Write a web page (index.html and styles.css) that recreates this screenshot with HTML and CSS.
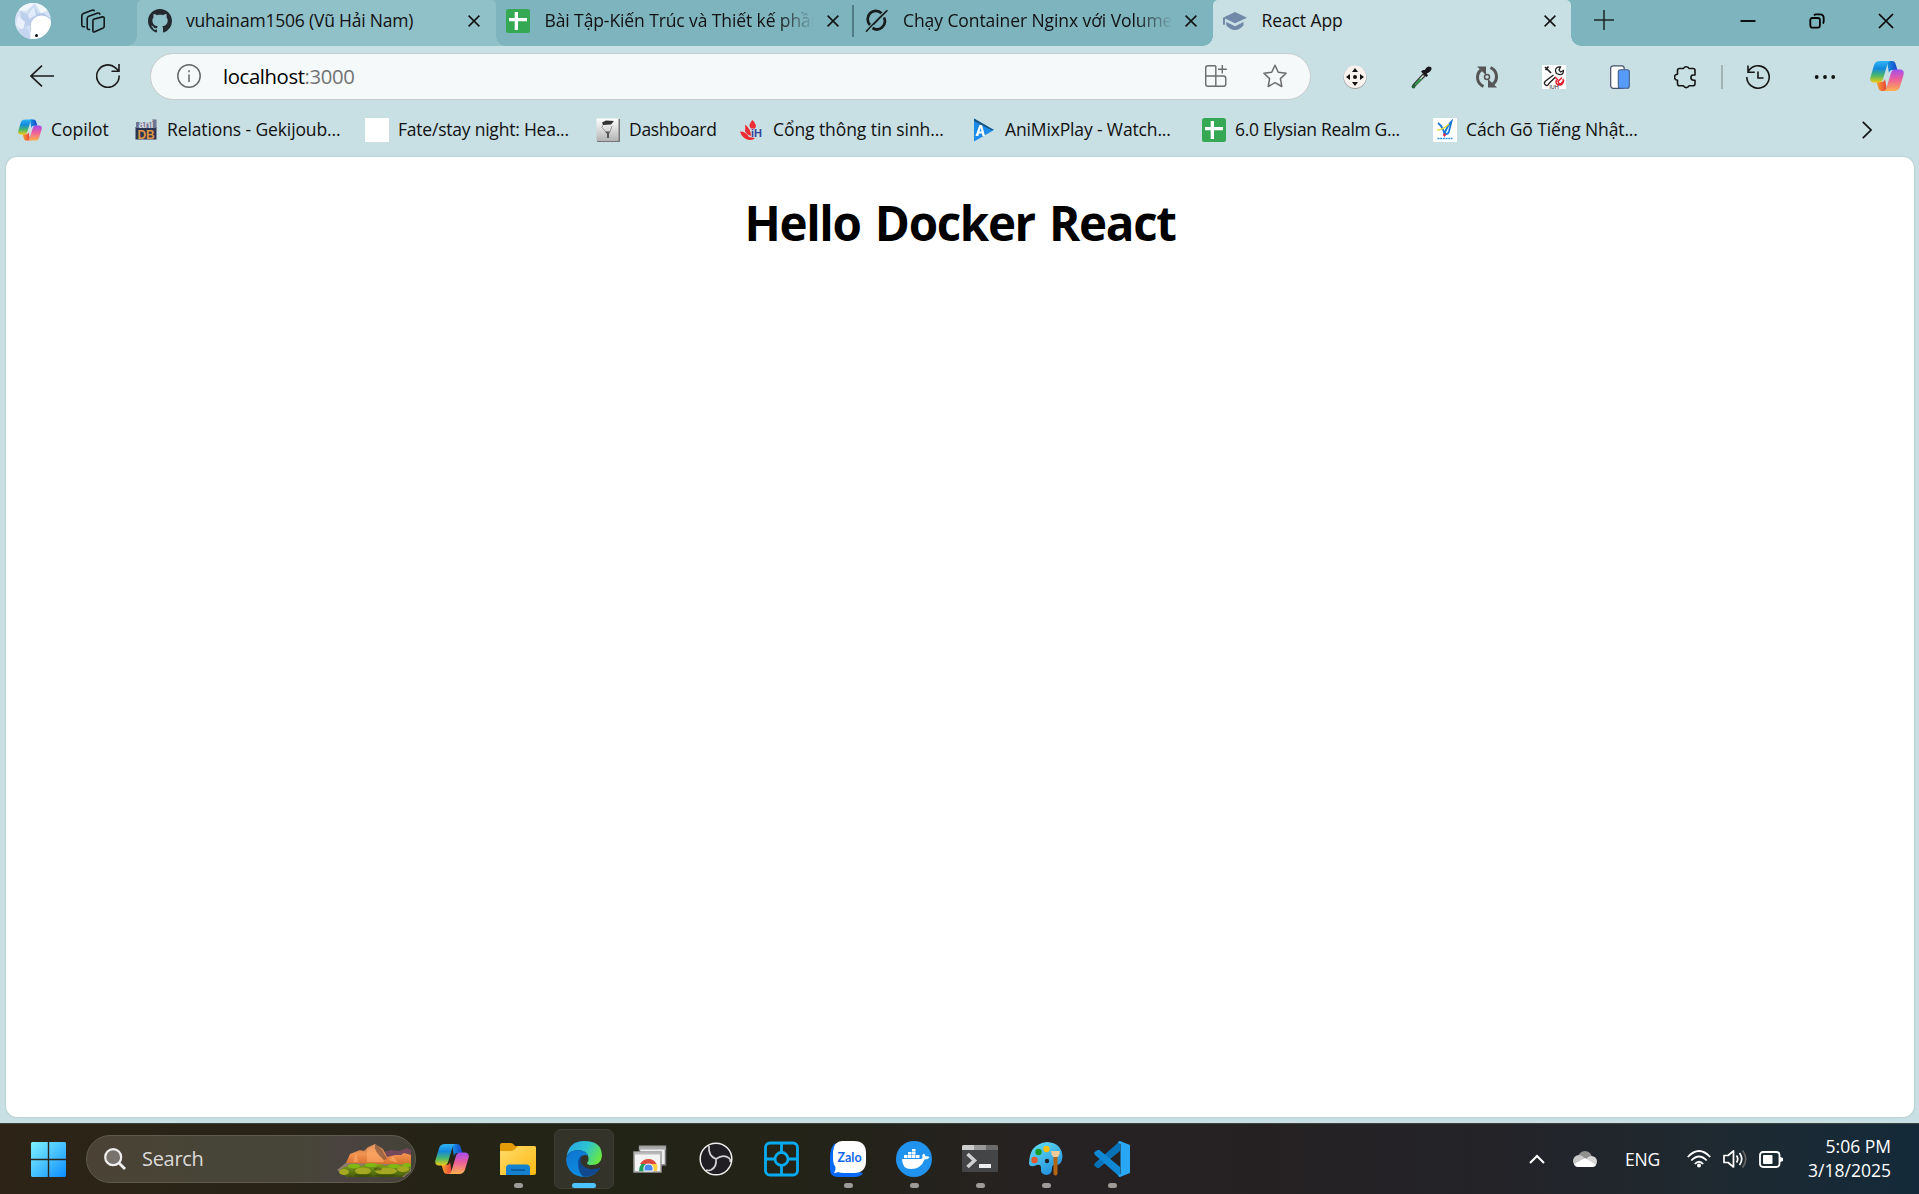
FILE: index.html
```html
<!DOCTYPE html>
<html lang="vi">
<head>
<meta charset="utf-8">
<title>React App</title>
<link rel="stylesheet" href="styles.css">
</head>
<body>
<svg class="defs" width="0" height="0" aria-hidden="true">
  <defs>
    <linearGradient id="cp-a" x1="0" y1="0" x2="0" y2="1"><stop offset="0" stop-color="#2fb4f5"/><stop offset=".35" stop-color="#1389dc"/><stop offset=".68" stop-color="#4cb868"/><stop offset="1" stop-color="#f2cb12"/></linearGradient>
    <linearGradient id="cp-b" x1="0" y1="0" x2="0" y2="1"><stop offset="0" stop-color="#a44df0"/><stop offset=".45" stop-color="#ec5e9c"/><stop offset="1" stop-color="#fdb04e"/></linearGradient>
    <linearGradient id="cp-c" x1="0" y1="0" x2="1" y2="0"><stop offset="0" stop-color="#1593e6"/><stop offset="1" stop-color="#1743c4"/></linearGradient>
    <linearGradient id="cp-d" x1="0" y1="0" x2="1" y2="0"><stop offset="0" stop-color="#f8a12e"/><stop offset="1" stop-color="#e8403c"/></linearGradient>
    <symbol id="copilot" viewBox="0 0 34 30">
      <path d="M17 0h5c2 0 3 1 3.600 3l1.900 6h-5c-2 0-3 1-3.600 3z" fill="url(#cp-c)"/>
      <path d="M17 30h-5c-2 0-3-1-3.600-3l-1.900-6h5c2 0 3-1 3.600-3z" fill="url(#cp-d)"/>
      <path d="M10 0h11c-2 0-3 1.500-3.600 3.500l-4.200 14c-.7 2.400-2 4-5 4H4c-3 0-4.500-2-3.500-5.500l3.600-12C5 1.200 7 0 10 0z" fill="url(#cp-a)"/>
      <path d="M24 30H13c2 0 3-1.500 3.600-3.500l4.200-14c.7-2.400 2-4 5-4H30c3 0 4.500 2 3.500 5.500l-3.600 12C29 28.800 27 30 24 30z" fill="url(#cp-b)"/>
    </symbol>
    <symbol id="sheet" viewBox="0 0 24 24"><rect width="24" height="24" rx="2.500" fill="#34a853"/><path d="M3 9h18v3.200H12V21H8.700V12.200H3zM8.700 3H12v7H8.700z" fill="#fff"/></symbol>
    <symbol id="x" viewBox="0 0 12 12"><path d="M.6.600l10.800 10.800M11.400.600L.6 11.400" stroke="#111" stroke-width="1.500"/></symbol>
  </defs>
</svg>

<header class="titlebar">
  <svg class="avatar" viewBox="0 0 36 36">
    <defs><clipPath id="av"><circle cx="18" cy="18" r="18"/></clipPath></defs>
    <g clip-path="url(#av)">
      <rect width="36" height="36" fill="#d6e3f5"/>
      <path d="M0 0h36v6L26 10 20 0l-9 8L3 7z" fill="#f1f8fb"/>
      <path d="M5 8l7 3 7-9 4 8 7 0 4 5-14 5-12 5z" fill="#bcd0ec"/>
      <path d="M13 11l6-8 2 9-7 4z" fill="#e1ebfa"/>
      <path d="M3 13l7 6-2 9-7-6z" fill="#eaf1fc"/><path d="M3 27l9-3 5 12H10z" fill="#c5d5f0"/>
      <ellipse cx="26.500" cy="23.500" rx="11.500" ry="11.500" fill="#fff" stroke="#a9bde0" stroke-width=".9"/>
      <path d="M15.500 36c-.5-5 0-8 2-10l14 10z" fill="#fff"/>
    </g>
    <circle cx="21.500" cy="32.500" r="1.500" fill="#111"/>
  </svg>
  <svg class="workspaces" viewBox="0 0 24 24" fill="none" stroke="#121819" stroke-width="1.600" stroke-linejoin="round" stroke-linecap="round"><path d="M12.500 10.200l9-2.300q1.700-.4 1.700 1.300v8q0 1.200-1 1.700l-8.500 3.900q-1.800.7-1.800-1.200v-9.400q0-1.600.6-2z"/><path d="M8.500 20.500q-2.300.3-2.300-1.800V9.500q0-1.700 1.600-2.300l9-3.100q1.700-.5 2 1"/><path d="M3.500 17.700q-2.700.3-2.700-2V6.800q0-1.700 1.600-2.400L11 1.300q1.800-.6 2.200.4"/></svg>

  <div class="tab hovered">
    <svg class="favicon" viewBox="0 0 16 16"><path fill="#24292f" d="M8 0C3.580 0 0 3.580 0 8c0 3.540 2.290 6.530 5.470 7.590.4.070.55-.17.55-.38 0-.19-.01-.82-.01-1.490-2.010.37-2.530-.49-2.690-.94-.09-.23-.48-.94-.82-1.130-.28-.15-.68-.52-.01-.53.63-.01 1.080.58 1.230.82.72 1.210 1.870.87 2.330.66.070-.52.28-.87.51-1.070-1.780-.2-3.640-.89-3.640-3.950 0-.87.31-1.590.82-2.150-.08-.2-.36-1.020.08-2.120 0 0 .67-.21 2.200.82.640-.18 1.320-.27 2-.27s1.360.09 2 .27c1.530-1.040 2.200-.82 2.200-.82.440 1.100.16 1.920.08 2.120.51.56.82 1.270.82 2.150 0 3.070-1.870 3.750-3.650 3.950.29.25.54.73.54 1.480 0 1.070-.01 1.930-.01 2.200 0 .21.15.46.55.38A8.010 8.010 0 0 0 16 8c0-4.420-3.580-8-8-8z"/></svg>
    <span class="tab-title t1">vuhainam1506 (Vũ Hải Nam)</span>
    <svg class="close"><use href="#x"/></svg>
  </div>
  <div class="tab divided">
    <svg class="favicon"><use href="#sheet"/></svg>
    <span class="tab-title fade t2">Bài Tập-Kiến Trúc và Thiết kế phần</span>
    <svg class="close"><use href="#x"/></svg>
  </div>
  <div class="tab">
    <svg class="favicon" viewBox="0 0 24 24" fill="none" stroke="#181c1d"><path d="M16.500 4.300A8 8.200 0 0 0 5 16" stroke-width="2.700"/><path d="M7.500 19A8 8.200 0 0 0 19 8.500" stroke-width="2.700"/><path d="M1 22.800Q9 13.500 22.500 1.200" stroke-width="1.500"/><path d="M8.500 15.500L21.500 2" stroke-width="1.300"/></svg>
    <span class="tab-title fade t3">Chạy Container Nginx với Volume</span>
    <svg class="close"><use href="#x"/></svg>
  </div>
  <div class="tab active">
    <svg class="favicon" viewBox="0 0 24 24" fill="#7189a8"><path d="M12 3L24 8.700 12 14.300 2 9.600V14.500Q2 16 1 16T0 14.500V8.700z"/><path d="M3.200 12.800L12 17l8.500-4.200v3.500Q17 21 12 21T3.200 16.300z"/><path d="M2 11.500l10 5 10-5" fill="none" stroke="#c8dfe3" stroke-width="1.300"/></svg>
    <span class="tab-title t4">React App</span>
    <svg class="close"><use href="#x"/></svg>
  </div>
  <svg class="newtab" viewBox="0 0 20 20"><path d="M10 0v20M0 10h20" stroke="#1a2426" stroke-width="1.500"/></svg>
  <div class="window-controls">
    <svg viewBox="0 0 16 16"><path d="M.5 8h15" stroke="#000" stroke-width="1.800"/></svg>
    <svg viewBox="0 0 16 16" fill="none" stroke="#000" stroke-width="1.800"><rect x="1.300" y="5" width="9.600" height="9.600" rx="2"/><path d="M5 2.300Q6 1.300 7 1.300h4Q14.700 1.300 14.700 5v3.500Q14.700 9.700 13.800 10.500"/></svg>
    <svg viewBox="0 0 16 16"><path d="M1 1l14 14M15 1L1 15" stroke="#000" stroke-width="1.700"/></svg>
  </div>
</header>

<nav class="toolbar">
  <svg class="back" viewBox="0 0 24 22" fill="none" stroke="#1b1b1b" stroke-width="1.600"><path d="M24 11H1M12 .6L1 11l11 10.400"/></svg>
  <svg class="reload" viewBox="0 0 24 24" fill="none" stroke="#1b1b1b" stroke-width="1.600"><path d="M23.100 11.500A11.200 11.200 0 1 1 19.500 3.900L23 7M23 0v7.200h-7.500"/></svg>
  <div class="address">
    <svg class="info" viewBox="0 0 24 24" fill="none" stroke="#666" stroke-width="1.500"><circle cx="12" cy="12" r="11.200"/><path d="M12 10.500v7.500M12 6.200v2"/></svg>
    <span class="url">localhost<span class="port">:3000</span></span>
    <svg class="apps" viewBox="0 0 22 22" fill="none" stroke="#6c6c6c" stroke-width="1.400"><path d="M10.800.700H3Q.7.700.7 3v16Q.7 21.300 3 21.300h15.500Q20.800 21.300 20.800 19v-5.500Q20.800 11 18.500 11H.7M10.800.700V21.300M17.300 0v8.600M13 4.300h8.800"/></svg>
    <svg class="star" viewBox="0 0 24 24" fill="none" stroke="#6c6c6c" stroke-width="1.500" stroke-linejoin="round"><path d="M12 1.200l3.300 7 7.800 1-5.700 5.400 1.400 7.900-6.800-3.800-6.800 3.800 1.400-7.900L.9 9.200l7.800-1z"/></svg>
  </div>
  <div class="extensions">
    <svg viewBox="0 0 24 24"><circle cx="12" cy="12.400" r="11.500" fill="#9c9c9c"/><circle cx="12" cy="11.800" r="11.200" fill="#f8f3ef"/><g fill="#111"><circle cx="12" cy="12" r="2"/><path d="M12 3l3 4H9zM12 21l3-4H9zM3 12l4-3v6zM21 12l-4-3v6z"/></g></svg>
    <svg viewBox="0 0 24 24"><path d="M4.500 19.500L14 9l2 2L6.500 20.500z" fill="#cfe8d6" stroke="#333" stroke-width="1.200"/><path d="M5.500 19l5-5h3l-6.500 6.500z" fill="#319447"/><path d="M12 6.500l5.500 5.500 1.500-1.500-1.300-2Q22 6.500 22.500 4T19.500 1.500Q17 2 15.800 5L14 5z" fill="#17171d"/><circle cx="4.500" cy="21.500" r="1.900" fill="#20663a"/></svg>
    <svg viewBox="0 0 24 24" fill="none" stroke="#555" stroke-width="3"><path d="M8.500 21.300A9.600 9.600 0 0 1 6 5M15.500 2.700A9.600 9.600 0 0 1 18 19"/><path d="M2 1.500h9V10zM22 22.500h-9V14z" fill="#555" stroke="none"/><circle cx="12" cy="12" r="2.500" stroke-width="1.500"/></svg>
    <svg viewBox="0 0 24 24"><rect width="24" height="24" fill="#fff"/><g fill="none" stroke="#222" stroke-width="1.300"><path d="M3 2l6 6M6.500 1.500L3.500 5" stroke-width="1.700"/><path d="M18.500 2q-5-.5-5 4l1 2.500 3 1q4 .5 4-4l-3 1.500-1.500-2z"/><path d="M11.500 10L3 16.500q-1.500 2 .5 3.500t3.500-1.500L13.500 12"/></g><path d="M13 12l3 3M20 12.500l-4 4 1 2 2 .5 3-4M14.500 15q-2 5 4 5 4-2 2.500-6" fill="none" stroke="#e0212c" stroke-width="1.500"/><text x="12" y="24" font-size="5.500" text-anchor="middle" fill="#222" font-family="Liberation Sans,sans-serif">IUH</text></svg>
    <svg viewBox="0 0 24 24"><rect x="2.700" y=".8" width="13.500" height="22.500" rx="2.500" fill="#fff" stroke="#455168" stroke-width="1.200"/><rect x="10.300" y="4.800" width="11" height="18.500" rx="2" fill="#579bfa" stroke="#455d86" stroke-width="1.100"/></svg>
    <svg viewBox="0 0 24 24" fill="none" stroke="#161616" stroke-width="1.600" stroke-linejoin="round"><path d="M5.500 3.500h4a3 3 0 0 1 5.500 0h4q2 0 2 2V10h-1.500a2.600 2.600 0 0 0 0 5.200H21v3.600q0 2-2 2h-4a3 3 0 0 1-5.500 0h-4q-2 0-2-2V15.300a3 3 0 0 1 0-6V5.500q0-2 2-2z"/></svg>
    <i class="rule"></i>
    <svg viewBox="0 0 24 24" fill="none" stroke="#161616" stroke-width="1.600"><path d="M.8 12a11.200 11.200 0 1 0 2.800-7.400L1.800 6.800M2 .5v6.800h6.800M12 6.500V13h5.500"/></svg>
    <svg viewBox="0 0 24 24" fill="#111"><circle cx="3.700" cy="12" r="1.900"/><circle cx="12" cy="12" r="1.900"/><circle cx="20.200" cy="12" r="1.900"/></svg>
  </div>
  <svg class="copilot-btn"><use href="#copilot"/></svg>
</nav>

<nav class="bookmarks">
  <a class="b1"><svg><use href="#copilot" y="1" height="22"/></svg><span>Copilot</span></a>
  <a class="b2"><svg viewBox="0 0 24 24"><rect x="1.500" y="9" width="21" height="12.500" fill="#2b3552"/><path d="M2 4h16V1.500h4.500V10H2z" fill="#6d7590"/><text x="12" y="9.500" font-size="10.500" font-weight="bold" text-anchor="middle" fill="#d7d9e2" font-family="Liberation Sans,sans-serif">ani</text><text x="12" y="20.500" font-size="12" font-weight="bold" text-anchor="middle" fill="#e09542" font-family="Liberation Sans,sans-serif">DB</text></svg><span>Relations - Gekijoub...</span></a>
  <a class="b3"><svg viewBox="0 0 24 24"><rect width="24" height="24" fill="#fff"/></svg><span>Fate/stay night: Hea...</span></a>
  <a class="b4"><svg viewBox="0 0 24 24"><defs><linearGradient id="gr" x2="0" y2="1"><stop stop-color="#fff"/><stop offset="1" stop-color="#b4b4b4"/></linearGradient></defs><path d="M2 1h22v23H1z" fill="#777"/><rect x=".5" y=".5" width="22" height="22.500" rx="1" fill="url(#gr)"/><path d="M6 4.500l4-2 8 .5-3 3.500-8 .5z" fill="#333"/><path d="M7 7l-1 2.500 4 4.500M16 8l-2 6" stroke="#999" fill="none"/><path d="M9 13.500h5l-1 2.500v4h-2v-4z" fill="#555"/></svg><span>Dashboard</span></a>
  <a class="b5"><svg viewBox="0 0 24 24"><path d="M12.500 2q5 5 2.500 8.500h-4Q7.500 7 12.500 2zM5 6.500q6 4.500 6 11.500-5-2-6-5 .5-3 0-6.500zM0 13.500q6 0 9 5.500l6 1q-1.500 2.500-6 2Q2 20.500 0 13.500z" fill="#ed2c33"/><text x="11" y="19" font-size="11" font-weight="bold" fill="#3a439b" font-family="Liberation Sans,sans-serif">iH</text></svg><span>Cổng thông tin sinh...</span></a>
  <a class="b6"><svg viewBox="0 0 24 24"><path d="M2 .5L22 12 2 23.500z" fill="#1c8bea"/><path d="M2 .5L22 12H19L2 3z" fill="#18567f"/><path d="M3.500 18L7.500 7h2.500l3 11h-2.500l-.6-2.500H7L6.300 18zM7.500 13.500h2L8.800 10z" fill="#fff"/></svg><span>AniMixPlay - Watch...</span></a>
  <a class="b7"><svg><use href="#sheet"/></svg><span>6.0 Elysian Realm G...</span></a>
  <a class="b8"><svg viewBox="0 0 24 24"><rect width="24" height="24" fill="#fff"/><path d="M5 5q5 4 6.500 11Q14 8 18.500 3.500q-1.500 6-2.500 10-1 3-4 2.500" fill="none" stroke="#1779d8" stroke-width="1.800"/><path d="M4 12q6 0 12-6" stroke="#e5da38" stroke-width="1.300" fill="none"/><circle cx="11.500" cy="17" r="1.400" fill="#e23"/><path d="M4.500 20.500h15" stroke="#2b97e6" stroke-width="1.300" stroke-dasharray="2 .7"/></svg><span>Cách Gõ Tiếng Nhật...</span></a>
  <svg class="more" viewBox="0 0 10 18"><path d="M.8.800L9 9 .8 17.200" fill="none" stroke="#111" stroke-width="1.700"/></svg>
</nav>

<main class="page"><h1>Hello Docker React</h1></main>

<footer class="taskbar">
  <svg class="start" viewBox="0 0 35 35"><defs><linearGradient id="win" x2="1" y2="1"><stop stop-color="#7df3ff"/><stop offset=".5" stop-color="#48c2ff"/><stop offset="1" stop-color="#0a8cff"/></linearGradient></defs><path d="M1 0H16.800V16.800H0V1zM18.200 0H34L35 1V16.800H18.200zM0 18.200H16.800V35H1L0 34zM18.200 18.200H35V34L34 35H18.200z" fill="url(#win)"/></svg>
  <div class="search">
    <svg class="lens" viewBox="0 0 22 22" fill="none" stroke="#eee"><circle cx="9.200" cy="9.200" r="8" stroke-width="2.200" fill="#77736c"/><path d="M15 15l6 6" stroke-width="2.800"/></svg>
    <span>Search</span>
    <svg class="scene" viewBox="0 0 76 36">
      <defs><linearGradient id="rock" x2="0" y2="1"><stop stop-color="#b87a50"/><stop offset=".5" stop-color="#f29350"/><stop offset="1" stop-color="#d8702f"/></linearGradient><linearGradient id="bush" x2="0" y2="1"><stop stop-color="#7fa51a"/><stop offset="1" stop-color="#465a0c"/></linearGradient></defs>
      <path d="M46 9l8-2 8 1 8-3 4 2v12H46z" fill="#73485b"/>
      <path d="M0 27l10-8h64v9l-7 6H10z" fill="#8f7969"/>
      <path d="M9 20l4-9 10-4 4 1 4-4 7-3 8 5 4 8 8-2h6l3-2 7 2v9H48z" fill="url(#rock)"/>
      <path d="M30 19V6l8-5 5 7 4 11zM16 19l3-10 2 10zM52 17l9 3-5-7z" fill="#ffab6a" opacity=".6"/>
      <path d="M38 1q-2 7 9 16l3-1-5-9z" fill="#7d5240" opacity=".7"/>
      <path d="M3 29q4-7 10-5 5-4 11-1 8-3 12 0 8-4 12 0 6-3 10 0 8-3 16-1l-1 6-8 6H10z" fill="url(#bush)"/>
      <g fill="#a5a91f"><ellipse cx="26" cy="28" rx="8" ry="3.500"/><ellipse cx="49" cy="28" rx="11" ry="3.500"/><ellipse cx="66" cy="26" rx="6" ry="3"/><ellipse cx="7" cy="29" rx="5" ry="3"/></g>
      <g fill="#80b914"><ellipse cx="17" cy="23" rx="6" ry="2.300"/><ellipse cx="34" cy="22" rx="6" ry="2"/><ellipse cx="57" cy="23" rx="6" ry="2"/><ellipse cx="70" cy="22" rx="4" ry="2"/></g>
      <g fill="#303f0c" opacity=".5"><ellipse cx="26" cy="32.500" rx="9" ry="1.500"/><ellipse cx="49" cy="32.500" rx="11" ry="1.500"/><ellipse cx="41" cy="26" rx="4" ry="1.500"/></g>
    </svg>
  </div>
  <div class="apps-row">
    <span class="app"><svg viewBox="0 0 36 36"><use href="#copilot" x="1" y="3" width="34" height="30"/></svg></span>
    <span class="app open"><svg viewBox="0 0 36 36"><defs><linearGradient id="fo" x2="1" y2="1"><stop stop-color="#ffdc6c"/><stop offset="1" stop-color="#fdb912"/></linearGradient></defs><path d="M0 4q0-2 2-2h9q2 0 4 3h19q2 0 2 2v10H0z" fill="#e39b08"/><path d="M0 10h12q2 0 4-3l2-2h16q2 0 2 2v25q0 2-2 2H0z" fill="url(#fo)"/><path d="M6 34v-7q0-3.500 3.500-3.500h17Q30 23.500 30 27v7z" fill="#1381cf"/><path d="M11 29h14" stroke="#0b4d8e" stroke-width="1.300"/></svg></span>
    <span class="app open current"><svg viewBox="0 0 36 36"><defs><linearGradient id="e1" x1="0" y1=".2" x2="1" y2=".6"><stop stop-color="#2aa5e4"/><stop offset=".5" stop-color="#2bc3d2"/><stop offset="1" stop-color="#6ae93e"/></linearGradient><linearGradient id="e2" x2=".5" y2="1"><stop stop-color="#0e74cf"/><stop offset="1" stop-color="#0d8ee2"/></linearGradient></defs><path d="M.5 15Q3.500 0 18 0 36 0 36 15q-1 9-10 9-5 0-5-2 2-2 1.500-5Q22 10 13 9 4 9 .5 15z" fill="url(#e1)"/><path d="M0 19Q1 9 12 9q8 0 10.500 6-7-3-8.500 4-1 9 8 12 6 1 11-3-5 8-15 8Q2 35 0 19z" fill="url(#e2)"/><path d="M12 21q1-6 5-7-4 4-1.500 9 5 6 12 5 4-.5 6-1 1 0-.5 2-6 7-15 7-6-3-6-15z" fill="#11498f"/></svg></span>
    <span class="app"><svg viewBox="0 0 36 36"><rect x="7.500" y="5" width="26" height="19" fill="#eee" stroke="#777" stroke-width="1.500"/><path d="M7 7h27" stroke="#aaa" stroke-width="3"/><rect x="2" y="11" width="27" height="20" fill="#f3f3f3" stroke="#999" stroke-width="1.500"/><path d="M2.500 12.500h26" stroke="#bbb" stroke-width="2"/><path d="M7 30a9.500 11 0 0 1 9-11v11z" fill="#17a160"/><path d="M8 23q3-5 8.500-5t8 5z" fill="#dc4a3d"/><path d="M16 23h9q1 3 0 7h-9z" fill="#ffce44"/><path d="M12 30q-1-7 4.500-7t4.500 7z" fill="#4a87ee" stroke="#fff"/></svg></span>
    <span class="app"><svg viewBox="0 0 36 36"><circle cx="18" cy="18" r="15.800" fill="#201e22" stroke="#eee" stroke-width="1.500"/><g fill="none" stroke="#d2d2d4" stroke-width="1.700"><path d="M18 18q-8-3-7-13M18 18q7-5 13-1 2 2 1 4M18 18q1 8-5 11-3 1-5 0"/></g></svg></span>
    <span class="app"><svg viewBox="0 0 36 36" fill="none" stroke="#08abf0" stroke-width="2.800"><rect x="1.500" y="2" width="32" height="32" rx="4.500"/><circle cx="17.500" cy="18" r="6.500"/><path d="M17.500 2v9.500M17.500 24.500v9.500M1.500 18h9.500M24 18h9.500"/></svg></span>
    <span class="app open"><svg viewBox="0 0 36 36"><path d="M5 2Q0 7 0 16v12q0 8 8 8h16q7 0 9-4L12 27z" fill="#0869f9"/><path d="M12 0h12q12 0 12 12v8q0 12-12 12H14q-4 0-6-1-2 1-4 1 2-3 1.500-6Q3 23 3 17v-6Q4 0 12 0z" fill="#fff"/><text x="19.500" y="20.800" text-anchor="middle" font-family="Lato,sans-serif" font-size="12.500" font-weight="bold" fill="#1268ef">Zalo</text></svg></span>
    <span class="app open"><svg viewBox="0 0 36 36"><circle cx="18" cy="18" r="18" fill="#2093ef"/><path d="M6 18h19q2-.5 1.500-2-1-2 1-3.500 2 1 2 3 2-.5 4 .5-1 2.500-5 2.500Q25 28 15 28 6 28 6 18z" fill="#fff"/><path d="M8 14h3.500v3H8zM12 14h3.500v3H12zM16 14h3.500v3H16zM20 14h3.500v3H20zM12 11h3.500v2.500H12zM16 11h3.500v2.500H16zM16 8h3.500v2.500H16z" fill="#fff"/></svg></span>
    <span class="app open"><svg viewBox="0 0 36 36"><rect y="4" width="36" height="27" rx="1.500" fill="#444547"/><path d="M0 9V5.500Q0 4 1.500 4H12v5z" fill="#ccc"/><path d="M12 4h12v5H12z" fill="#999"/><path d="M24 4h10.500Q36 4 36 5.500V9H24z" fill="#6b6b6b"/><path d="M5.500 13l7 6.500-7 6.500" fill="none" stroke="#d0d0d0" stroke-width="3.500"/><path d="M17 23h12v4H17z" fill="#eee"/></svg></span>
    <span class="app open"><svg viewBox="0 0 36 36"><defs><linearGradient id="pa" x2=".6" y2="1"><stop stop-color="#69e4f5"/><stop offset="1" stop-color="#2392de"/></linearGradient></defs><path d="M19 1q15 1 15.500 15-1 8-6 8-4-1-4.500 3 0 6-5 7-7 0-6-7 0-4-4-3-7 3-8-1Q1 3 19 1z" fill="url(#pa)"/><circle cx="19" cy="20" r="2.200" fill="#242226"/><circle cx="6.500" cy="19" r="3.200" fill="#e5552a"/><circle cx="10.500" cy="11" r="3.200" fill="#1b9a28"/><circle cx="18.500" cy="8" r="3.200" fill="#fdbd11"/><path d="M25.500 16h4v17q-2 3-4 0z" fill="#b46513"/><path d="M23 10h9q0 4-2.500 6h-4Q23 14 23 10z" fill="#f0ca98"/></svg></span>
    <span class="app open"><svg viewBox="0 0 36 36"><path d="M26 0v10L5 27H3l-3-3 1-2z" fill="#0872b8"/><path d="M1 14L0 11.500 3.500 9h2L26 26v10z" fill="#1188d6"/><path d="M26 0l10 4v28l-10 4q-2 0-2-2l2.500-1V3L24 2q0-2 2-2z" fill="#2aa7f4"/></svg></span>
  </div>
  <div class="tray">
    <svg class="chev" viewBox="0 0 16 10"><path d="M1 9l7-7 7 7" fill="none" stroke="#fff" stroke-width="2"/></svg>
    <svg class="cloud" viewBox="0 0 24 16"><circle cx="12" cy="7" r="7" fill="#8f8f8f"/><circle cx="6" cy="10" r="6" fill="#c8c8c8"/><circle cx="18.500" cy="10.500" r="5.500" fill="#d8d8d8"/><path d="M1 13l11-6 11 7q-1 2-4 2H5q-3 0-4-3z" fill="#fff"/></svg>
    <span class="lang">ENG</span>
    <svg class="wifi" viewBox="0 0 24 18" fill="none" stroke="#fff" stroke-width="1.800"><path d="M.8 7q11.200-12 22.400 0M4.300 10.500q7.700-8 15.400 0M7.800 14q4.200-4.500 8.400 0"/><circle cx="12" cy="15.500" r="2" fill="#fff" stroke="none"/></svg>
    <svg class="vol" viewBox="0 0 24 20" fill="none" stroke="#fff" stroke-width="1.700"><path d="M1 6.500h4L10.500 2v16L5 13.500H1z" stroke-linejoin="round"/><path d="M13.500 6.500q2.500 3.500 0 7M16.500 4q4.500 6 0 12"/><path d="M19.500 1.500q6.500 8.500 0 17" stroke="#666"/></svg>
    <svg class="bat" viewBox="0 0 24 17"><rect x="1" y="1" width="19.500" height="15" rx="3" fill="none" stroke="#fff" stroke-width="1.800"/><rect x="4" y="4" width="9.500" height="9" rx="1" fill="#fff"/><path d="M21 6l3 1v3l-3 1z" fill="#fff"/></svg>
    <div class="clock"><span class="time">5:06 PM</span><span class="date">3/18/2025</span></div>
  </div>
</footer>
</body>
</html>
```
FILE: styles.css
```css
* { box-sizing: border-box; }
body {
  margin: 0;
  height: 1194px;
  display: flex;
  flex-direction: column;
  overflow: hidden;
  background: #c8dfe3;
  color: #111;
  font-family: "Open Sans", "Noto Sans", sans-serif;
  font-size: 17.500px;
}
svg { display: block; flex: none; }
svg.defs { position: absolute; }
span { white-space: nowrap; }

/* Tab strip */
.titlebar { height: 46px; flex: none; display: flex; align-items: center; background: #7eb4be; padding-bottom: 4px; }
.avatar { width: 36px; height: 36px; margin-left: 15px; }
.workspaces { width: 24px; height: 24px; margin: 0 32px 0 30px; }
.tab { position: relative; width: 358.500px; height: 46px; margin-bottom: -4px; padding: 0 0 4px 10.500px; display: flex; align-items: center; flex: none; border-radius: 5px 5px 0 0; }
.favicon { width: 24px; height: 24px; margin-right: 14.500px; }
.tab-title { width: 268px; overflow: hidden; line-height: 28px; padding-bottom: 2px; }
.t1 { letter-spacing: -0.200px; }
.t2 { letter-spacing: -0.100px; }
.t3 { letter-spacing: -0.080px; }
.t4 { letter-spacing: -0.100px; }
.fade { -webkit-mask-image: linear-gradient(90deg, #000 232px, transparent 270px); mask-image: linear-gradient(90deg, #000 232px, transparent 270px); }
.close { width: 12px; height: 12px; margin-left: 14px; }
.hovered { --c: #90c0c8; background: var(--c); }
.active { --c: #c8dfe3; background: var(--c); }
.hovered::before, .hovered::after, .active::before, .active::after {
  content: ""; position: absolute; bottom: 0; width: 10px; height: 10px;
}
.hovered::before, .active::before { right: 100%; background: radial-gradient(circle at 0 0, transparent 9.500px, var(--c) 10px); }
.hovered::after, .active::after { left: 100%; background: radial-gradient(circle at 100% 0, transparent 9.500px, var(--c) 10px); }
.divided { border-right: 2px solid transparent; border-image: linear-gradient(transparent 6px, #507d85 6px, #507d85 36px, transparent 36px) 1; }
.newtab { width: 20px; height: 20px; margin-left: 23px; margin-top: -2px; }
.window-controls { display: flex; gap: 53px; margin: 0 25.500px 0 auto; }
.window-controls svg { width: 16px; height: 16px; }

/* Toolbar */
.toolbar { height: 60px; flex: none; display: flex; align-items: center; }
.back { width: 24px; height: 22px; margin: 0 42px 0 30px; }
.reload { width: 24px; height: 24px; margin-right: 30px; }
.address { width: 1161px; height: 47px; border: 1px solid #c6cccd; border-radius: 24px; background: #f5f9fa; display: flex; align-items: center; padding: 0 23px 0 26px; }
.info { width: 24px; height: 24px; margin-right: 22px; }
.url { font-size: 20.300px; color: #000; line-height: 30px; letter-spacing: -0.380px; }
.port { color: #737373; }
.apps { width: 22px; height: 22px; margin-left: auto; }
.star { width: 24px; height: 24px; margin-left: 36px; }
.extensions { display: flex; gap: 42.200px; margin-left: 32px; padding-top: 1px; }
.extensions svg { width: 24px; height: 24px; }
.rule { width: 2px; height: 24px; background: #a2b2b5; margin: 0 -19px 0 -19px; }
.copilot-btn { width: 34px; height: 30px; margin: 0 15px 0 auto; }

/* Bookmarks */
.bookmarks { height: 51px; flex: none; display: flex; align-items: center; padding-left: 18px; padding-bottom: 3px; }
.bookmarks a { display: flex; align-items: center; gap: 9px; flex: none; }
.bookmarks a svg { width: 24px; height: 24px; }
.bookmarks span { line-height: 28px; padding-bottom: 2px; }
.b1 { width: 116px; }
.b2 { width: 231px; letter-spacing: -0.110px; }
.b3 { width: 231px; letter-spacing: -0.220px; }
.b4 { width: 144px; letter-spacing: -0.300px; }
.b5 { width: 232px; letter-spacing: -0.080px; }
.b6 { width: 230px; letter-spacing: -0.140px; }
.b7 { width: 231px; letter-spacing: -0.320px; }
.b8 { letter-spacing: -0.130px; }
.more { width: 10px; height: 18px; margin: 0 47px 0 auto; }

/* Document */
.page { flex: 1; margin: 0 5px 6px 6px; background: #fff; border-radius: 11px; box-shadow: 0 0 2px #9db9be; }
.page h1 { margin: 31px 0 0; font-size: 47.500px; line-height: 70px; font-weight: 700; text-align: center; color: #000; letter-spacing: -1.350px; word-spacing: 3.300px; }

/* Taskbar */
.taskbar { height: 71px; flex: none; display: flex; align-items: center; border-top: 1px solid #3f423a; color: #fff;
  background: linear-gradient(90deg, #2d2417 0, #282317 300px, #222416 620px, #242319 850px, #262223 1050px, #262122 1200px, #232328 1500px, #1f2930 1700px, #142a3a 1919px); }
.start { width: 35px; height: 35px; margin: 0 20px 0 31px; }
.search { width: 330px; height: 48px; border-radius: 24px; border: 1px solid #5e5a4e; background: linear-gradient(90deg, #4b4235, #474537 35%, #474538 65%, #4a4340 80%, #444337); display: flex; align-items: center; padding-left: 17px; }
.lens { width: 22px; height: 22px; }
.search span { font-size: 20px; color: #dcdad6; margin-left: 16px; line-height: 30px; letter-spacing: -0.300px; }
.scene { width: 76px; height: 36px; margin: 4px 2px 0 auto; }
.apps-row { display: flex; gap: 6px; margin-left: 6px; }
.app { position: relative; width: 60px; height: 60px; border-radius: 7px; display: flex; align-items: center; justify-content: center; }
.app svg { width: 36px; height: 36px; }
.open::after { content: ""; position: absolute; left: 26px; bottom: 1px; width: 9px; height: 5px; border-radius: 3px; background: #9c9b97; }
.current { background: #33332a; border: 1px solid #414037; }
.current::after { left: 17px; bottom: 0; width: 24px; background: #4cc2ff; }
.tray { display: flex; align-items: center; margin: 0 28px 0 auto; }
.chev { width: 16px; height: 10px; margin-right: 28px; }
.cloud { width: 24px; height: 16px; margin-right: 28px; }
.lang { width: 62px; line-height: 30px; letter-spacing: -0.200px; }
.wifi { width: 24px; height: 18px; margin-right: 12px; }
.vol { width: 24px; height: 20px; margin-right: 12px; }
.bat { width: 24px; height: 17px; }
.clock { width: 108px; display: flex; flex-direction: column; align-items: flex-end; line-height: 24px; padding-bottom: 2px; }
```
